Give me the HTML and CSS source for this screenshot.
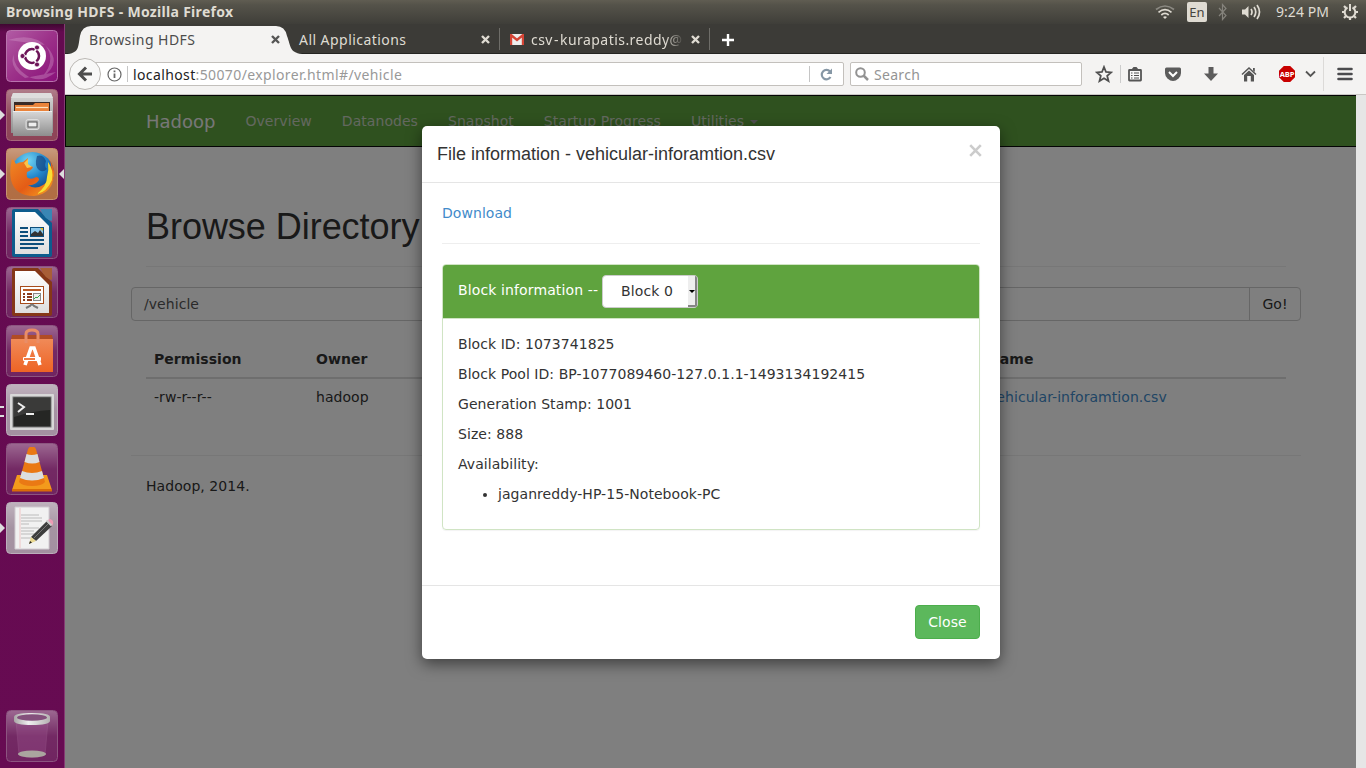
FILE: index.html
```html
<!DOCTYPE html>
<html lang="en">
<head>
<meta charset="utf-8">
<title>Browsing HDFS</title>
<link rel="stylesheet" href="styles.css">
</head>
<body>
<header class="panel">
  <span class="panel-title">Browsing HDFS - Mozilla Firefox</span>
  <div class="indicators">
    <svg width="20" height="16" viewBox="0 0 20 16" fill="none" stroke-width="1.7"><path d="M1 5.5Q10-1.5 19 5.5" stroke="#8b8982"/><path d="M3.5 8.3Q10 3 16.5 8.3M6.3 11Q10 7.7 13.7 11" stroke="#dfdbd2"/><path d="M8 13q2-1.6 4 0l-2 2z" fill="#dfdbd2"/></svg>
    <span class="lang">En</span>
    <svg class="bt" width="10" height="18" viewBox="0 0 10 18" fill="none" stroke="#85837c" stroke-width="1.2"><path d="M1 5l7 7.5-3.5 4V1.5L8 5.5 1 13"/></svg>
    <svg class="vol" width="20" height="18" viewBox="0 0 20 18" fill="none" stroke="#dfdbd2" stroke-width="1.7"><path d="M1 6.5h3L7.5 3v12L4 11.500H1z" fill="#dfdbd2" stroke="none"/><path d="M10 6q2 3 0 6M13 4q3.500 5 0 10M16 2q5 7 0 14"/></svg>
    <span class="clock">9:24 PM</span>
    <svg class="gear" width="18" height="18" viewBox="0 0 18 18" fill="none" stroke="#dfdbd2"><path d="M6.500 4.500a5.300 5.300 0 1 0 5 0" stroke-width="2"/><path d="M9 1v7" stroke-width="2"/><path d="M3 3l2 2M15 3l-2 2M1 9h2.500M17 9h-2.500M3 15l2-2M15 15l-2-2M9 17v-2.500" stroke-width="2.200"/></svg>
  </div>
</header>

<div class="desktop">
<nav class="launcher">
  <svg class="tile" viewBox="0 0 52 52">
    <defs>
      <linearGradient id="dash" x1="0" y1="0" x2="1" y2="1"><stop offset="0" stop-color="#b25ca5"/><stop offset=".5" stop-color="#9c3189"/><stop offset="1" stop-color="#89107a"/></linearGradient>
      <linearGradient id="sheen" x1="0" y1="0" x2="0" y2="1"><stop offset="0" stop-color="#fff" stop-opacity=".36"/><stop offset=".5" stop-color="#fff" stop-opacity=".1"/><stop offset="1" stop-color="#fff" stop-opacity=".08"/></linearGradient>
      <linearGradient id="silver" x1="0" y1="0" x2="0" y2="1"><stop offset="0" stop-color="#d8d8d8"/><stop offset="1" stop-color="#8e8e8e"/></linearGradient>
      <linearGradient id="paper" x1="0" y1="0" x2="0" y2="1"><stop offset="0" stop-color="#fff"/><stop offset="1" stop-color="#dedede"/></linearGradient>
      <linearGradient id="orange" x1="0" y1="0" x2="0" y2="1"><stop offset="0" stop-color="#f08a58"/><stop offset="1" stop-color="#ee6425"/></linearGradient>
      <radialGradient id="globe" cx=".4" cy=".2" r=".8"><stop offset="0" stop-color="#71d4f2"/><stop offset=".5" stop-color="#2387cc"/><stop offset="1" stop-color="#123b7a"/></radialGradient>
      <linearGradient id="fox" x1="0" y1="0" x2="1" y2="1"><stop offset="0" stop-color="#f08a25"/><stop offset=".55" stop-color="#e45c16"/><stop offset="1" stop-color="#f7a523"/></linearGradient>
      <linearGradient id="rim" x1="0" y1="0" x2="1" y2="0"><stop offset="0" stop-color="#a9a6a6"/><stop offset=".4" stop-color="#efefef"/><stop offset="1" stop-color="#b5b2b2"/></linearGradient>
    </defs>
    <rect x=".5" y=".5" width="51" height="51" rx="4" fill="url(#dash)" stroke="#b873ad"/>
    <path d="M2 10Q28 2 42 18T36 47Q51 30 39 15M50 42Q34 55 20 45T8 24Q2 37 19 48" fill="#d7a3cf" opacity=".35"/>
    <circle cx="26" cy="26" r="14" fill="#fff"/><circle cx="26" cy="26" r="7" fill="none" stroke="#6c1458" stroke-width="2.600"/>
    <path d="M26 26L12 26M26 26L33 14M26 26L33 38" stroke="#fff" stroke-width="1.500"/><circle cx="26" cy="26" r="5.200" fill="#fff"/>
    <g fill="#6c1458" stroke="#fff" stroke-width=".8"><circle cx="16.500" cy="26" r="2.500"/><circle cx="31" cy="17.500" r="2.500"/><circle cx="31" cy="34.500" r="2.500"/></g>
  </svg>
  <div class="app run">
    <svg class="tile" viewBox="0 0 52 52"><rect x=".5" y=".5" width="51" height="51" rx="4" fill="#843449" stroke="#a7687a"/><rect x="1" y="1" width="50" height="50" rx="4" fill="url(#sheen)"/><path d="M7 4h38l2 6v34H5V10z" fill="url(#silver)"/><path d="M7 4h38l2 5H5z" fill="#dedede"/><path d="M8 13h36v9H8z" fill="#3a2a26"/><path d="M9 16h18l2-2h14v8H9z" fill="#ea833a"/><path d="M10 18.500h32" stroke="#fde3c0" stroke-width="1.200"/><path d="M7 22h39v25H7z" fill="url(#silver)"/><path d="M7 22.500h39" stroke="#eee"/><rect x="20" y="30.500" width="13" height="10" rx="2" fill="#bbb" stroke="#ddd"/><rect x="22" y="33" width="9" height="5" fill="#eee" stroke="#555"/></svg>
  </div>
  <div class="app run active">
    <svg class="tile" viewBox="0 0 52 52"><rect x=".5" y=".5" width="51" height="51" rx="4" fill="#aa6133" stroke="#c69371"/><rect x="1" y="1" width="50" height="50" rx="4" fill="url(#sheen)"/><circle cx="26.500" cy="25.500" r="21.500" fill="url(#globe)"/><path d="M31 8q6-2 9 5q-2 6 1 8-4 4-8 1-5-4-2-14z" fill="#123f7c" opacity=".65"/><path d="M6 11q3 2 4 5 3-2 7-2l5-4q-1 5 0 7l5 2q-1 3-6 5-1 5 1 6 4 2 8-1 3 0 3 3-4 6-11 5 7 5 15 0 7-4 8-13 1-8-2-13 6 8 5 17-2 18-20 20Q9 48 5 32 3 23 6 11z" fill="url(#fox)"/><path d="M42 14q6 8 4 18-5 12-15 14 10-8 10-17 2-7 1-15z" fill="#f8df35"/><path d="M18 15l4-4v5l4 3-5 1z" fill="#f8c44a"/></svg>
  </div>
  <svg class="tile" viewBox="0 0 52 52"><rect x=".5" y=".5" width="51" height="51" rx="4" fill="#641253" stroke="#8c5580"/><rect x="1" y="1" width="50" height="50" rx="4" fill="url(#sheen)"/><path d="M8 2h24l14 14v32q0 2-2 2H8q-2 0-2-2V4q0-2 2-2z" fill="#0d5c8d"/><path d="M9 5h20l14 14v28H9z" fill="url(#paper)"/><path d="M34 2h12v12q-7-1-12-12z" fill="#3986b4"/><path d="M14 21h8M14 25h8M14 29h8M14 33h24M14 37h24M14 41h18" stroke="#0e4f7b" stroke-width="2"/><rect x="24.500" y="20.500" width="13" height="9" fill="#8cc9ec" stroke="#0e4f7b"/><path d="M25 29v-2l4-3 3 2 2-3 3 4v2z" fill="#333"/><path d="M34 21h3v3z" fill="#e9bd26"/></svg>
  <svg class="tile" viewBox="0 0 52 52"><rect x=".5" y=".5" width="51" height="51" rx="4" fill="#641253" stroke="#8c5580"/><rect x="1" y="1" width="50" height="50" rx="4" fill="url(#sheen)"/><path d="M8 2h24l14 14v32q0 2-2 2H8q-2 0-2-2V4q0-2 2-2z" fill="#853718"/><path d="M9 5h20l14 14v28H9z" fill="url(#paper)"/><path d="M34 2h12v12q-7-1-12-12z" fill="#a85e37"/><rect x="14.500" y="20.500" width="23" height="17" fill="#fff" stroke="#a74c1c"/><path d="M17 24h18" stroke="#b95a25" stroke-width="2"/><path d="M17 28h2M17 31h2M17 34h2M21 28h5M21 31h5M21 34h5" stroke="#8b3b1c" stroke-width="2"/><rect x="27.500" y="27.500" width="7" height="7" fill="#eee" stroke="#888"/><path d="M28 33l2-2 1 1 3-3" fill="none" stroke="#35a84a"/><path d="M20 42l4-2q2-3 4 0l4 2" fill="none" stroke="#777" stroke-width="2"/></svg>
  <svg class="tile" viewBox="0 0 52 52"><rect x=".5" y=".5" width="51" height="51" rx="4" fill="#641253" stroke="#8c5580"/><rect x="1" y="1" width="50" height="50" rx="4" fill="url(#sheen)"/><path d="M6 10h40l1 5H5z" fill="#b14c25"/><path d="M5 14h42v33H5z" fill="url(#orange)"/><path d="M20 18V9q0-4 6-4t6 4v9" fill="none" stroke="#e98d67" stroke-width="3"/><path d="M19 40l6-17h3l6 17" fill="none" stroke="#fff" stroke-width="3.600"/><rect x="17" y="32" width="18" height="4" rx="1" fill="#fff"/><path d="M18 34h11" stroke="#ef6e32" stroke-width="1.800"/></svg>
  <div class="app multi">
    <svg class="tile" viewBox="0 0 52 52"><rect x=".5" y=".5" width="51" height="51" rx="4" fill="#9c8799" stroke="#bcaebb"/><rect x="1" y="1" width="50" height="50" rx="4" fill="url(#sheen)"/><rect x="4" y="10" width="44" height="36" rx="1" fill="#d8d8d8"/><rect x="7" y="13" width="38" height="30" fill="#252624" stroke="#777"/><path d="M8 14h36v12q-18 1-36 7z" fill="#555" opacity=".45"/><path d="M12 19l6 4-6 5M20 30h8" fill="none" stroke="#eee" stroke-width="2"/></svg>
  </div>
  <svg class="tile" viewBox="0 0 52 52"><rect x=".5" y=".5" width="51" height="51" rx="4" fill="#641253" stroke="#8c5580"/><rect x="1" y="1" width="50" height="50" rx="4" fill="url(#sheen)"/><path d="M11 32h30l5 15H6z" fill="#f39a1c"/><path d="M6 46h40v2.500H6z" fill="#d96c08"/><path d="M24 4h4q1.500 0 2.500 4L39 39q-3 4-13 4t-13-4l8.500-31q1-4 2.500-4z" fill="#ea7914"/><path d="M20.500 11q5 2 11 0l2 8q-7 3-15 0zM16 28q10 4 20 0l2 7q-12 5-24 0z" fill="#dcdedf"/></svg>
  <div class="app run">
    <svg class="tile" viewBox="0 0 52 52"><rect x=".5" y=".5" width="51" height="51" rx="4" fill="#9b8798" stroke="#bcaebb"/><rect x="1" y="1" width="50" height="50" rx="4" fill="url(#sheen)"/><path d="M9 5h34v42H9z" fill="#f1f1f1" stroke="#d0cbd0"/><path d="M14 6v40" stroke="#efc5c5"/><path d="M15 13h18M15 16h21M15 19h21M15 22h8M15 26h18M15 29h13M15 32h16M15 36h14" stroke="#bbb"/><path d="M25 35L41 19l5 5-16 15z" fill="#3d3d3d"/><path d="M28 36L43 21" stroke="#777"/><path d="M23 42l2-7 5 4z" fill="#e9d890"/><path d="M42 18l2-1q4 1 3 5l-1 2z" fill="#ed9bb5"/><path d="M40.500 18.500l5 5" stroke="#ccc" stroke-width="2"/><path d="M23 42l1-3 2 1.500z" fill="#222"/></svg>
  </div>
  <svg class="tile trash" viewBox="0 0 52 52"><rect x=".5" y=".5" width="51" height="51" rx="4" fill="#641253" stroke="#8c5580"/><rect x="1" y="1" width="50" height="50" rx="4" fill="url(#sheen)"/><path d="M10 11l3 34q13 5 26 0l3-34z" fill="#a35b96" opacity=".3" stroke="#b982ae" stroke-width=".7"/><ellipse cx="26" cy="44" rx="14" ry="3.500" fill="#aaa59f"/><path d="M8 7q0-4 18-4t18 4v4q-1 4-18 4T8 11z" fill="url(#rim)"/><ellipse cx="26" cy="7.500" rx="15" ry="3.200" fill="#84507c"/></svg>
</nav>

<main class="browser">
  <div class="tabs">
    <svg class="tab-shape" width="240" height="30" viewBox="0 0 240 30"><path d="M0 30C15 30 13 22 15 12Q17 2 26 2H211Q220 2 222 12C226 22 224 30 240 30z" fill="#f4f3f2"/></svg>
    <div class="tab tab-on"><span class="t1">Browsing HDFS</span><svg class="x" width="9" height="9" viewBox="0 0 9 9"><path d="M1 1l7 7M8 1L1 8"/></svg></div>
    <div class="tab tab-two"><span class="t2">All Applications</span><svg class="x" width="9" height="9" viewBox="0 0 9 9"><path d="M1 1l7 7M8 1L1 8"/></svg></div>
    <div class="tab tab-mail"><svg width="14" height="11" viewBox="0 0 14 11"><path d="M0 0h14v11H0z" fill="#eee"/><path d="M1 11V1l6 5 6-5v10" fill="none" stroke="#d54435" stroke-width="2.400"/></svg><span class="t3">csv - kurapatis.reddy@</span><svg class="x" width="9" height="9" viewBox="0 0 9 9"><path d="M1 1l7 7M8 1L1 8"/></svg></div>
    <svg class="plus" width="14" height="14" viewBox="0 0 14 14"><path d="M7 1v12M1 7h12" stroke="#fff" stroke-width="2.400"/></svg>
  </div>
  <div class="toolbar">
    <span class="back"><svg width="16" height="16" viewBox="0 0 16 16" fill="none" stroke="#4d4d4d" stroke-width="3"><path d="M9 1.500L2.500 8 9 14.500M3 8h12"/></svg></span>
    <div class="url">
      <svg width="15" height="15" viewBox="0 0 15 15" fill="none" stroke="#666"><circle cx="7.500" cy="7.500" r="6.500" stroke-width="1.200"/><path d="M7.500 6.500V11M7.500 3.500v1.800" stroke-width="1.800"/></svg>
      <i class="sep"></i><span class="address"><b>localhost</b>:50070/explorer.html#/vehicle</span>
      <i class="sep reload-sep"></i>
      <svg class="reload" width="13" height="13" viewBox="0 0 13 13"><path d="M10 3.500A4.700 4.700 0 1 0 10.500 9" fill="none" stroke="#8697a5" stroke-width="2.200"/><path d="M12 .5V6H6.500z" fill="#8697a5"/></svg>
    </div>
    <div class="search"><svg width="14" height="14" viewBox="0 0 14 14" fill="none" stroke="#929292"><circle cx="5.500" cy="5.500" r="4.300" stroke-width="2"/><path d="M8.500 8.500L13 13" stroke-width="2.500"/></svg><span class="search-text">Search</span></div>
    <div class="tools">
      <svg width="18" height="18" viewBox="0 0 18 18"><path d="M9 2l2 5 5.200.4-4 3.400 1.300 5.200L9 13.200 4.500 16l1.300-5.200-4-3.400L7 7z" fill="none" stroke="#505050" stroke-width="1.800"/></svg>
      <i class="star-sep"></i>
      <svg class="list" width="16" height="16" viewBox="0 0 16 16"><rect x="2" y="4" width="12" height="10.500" rx=".5" fill="#f8f8f8" stroke="#555" stroke-width="1.800"/><path d="M4.500 3.500L6.500 1h3l2 2.500z" fill="#555"/><path d="M4 7h1.500M7 7h5M4 9.500h1.500M7 9.500h5M4 12h1.500M7 12h5" stroke="#505050" stroke-width="1.200"/></svg>
      <svg class="pocket" width="16" height="16" viewBox="0 0 16 16"><path d="M1.500 1.500h13q1.500 0 1.500 1.500v4q0 3-2.500 5.500Q8 17.500 2.500 12.500 0 10 0 7V3q0-1.500 1.500-1.500z" fill="#5c5c5c"/><path d="M4 6l4 4 4-4" fill="none" stroke="#fff" stroke-width="2"/></svg>
      <svg class="down" width="14" height="16" viewBox="0 0 14 16"><path d="M4.500 1h5v6.500H14L7 15 0 7.500h4.500z" fill="#5c5c5c"/></svg>
      <svg class="home" width="16" height="16" viewBox="0 0 16 16"><path d="M1 8.500L8 2l7 6.500" fill="none" stroke="#555" stroke-width="1.500"/><path d="M3 9l5-4.500L13 9v6.500H9.800V10H6.200v5.500H3z" fill="#555"/><path d="M12 2h1.800v4L12 4.500z" fill="#555"/></svg>
      <span class="abp">ABP</span>
      <svg class="chev" width="11" height="8" viewBox="0 0 11 8"><path d="M1 1.500l4.500 4.500L10 1.500" fill="none" stroke="#555" stroke-width="1.800"/></svg>
      <i class="menu-sep"></i>
      <svg class="menu" width="16" height="14" viewBox="0 0 16 14"><path d="M1.500 2h13M1.500 7h13M1.500 12h13" stroke="#4b4b4e" stroke-width="2.600" stroke-linecap="round"/></svg>
    </div>
  </div>

  <div class="viewport">
    <div class="page">
      <div class="navbar"><span class="brand">Hadoop</span><span>Overview</span><span>Datanodes</span><span>Snapshot</span><span>Startup Progress</span><span>Utilities<i class="caret"></i></span></div>
      <div class="container">
        <h1>Browse Directory</h1>
        <div class="path"><span class="path-input">/vehicle</span><span class="go">Go!</span></div>
        <table>
          <thead><tr><th class="perm">Permission</th><th class="owner">Owner</th><th>Name</th></tr></thead>
          <tbody><tr><td>-rw-r--r--</td><td>hadoop</td><td class="link">vehicular-inforamtion.csv</td></tr></tbody>
        </table>
        <footer>Hadoop, 2014.</footer>
      </div>
      <div class="backdrop">
        <section class="modal">
          <div class="modal-head"><h4>File information - vehicular-inforamtion.csv</h4><svg width="13" height="13" viewBox="0 0 13 13"><path d="M1.200 1.200l10.600 10.600M11.800 1.200L1.200 11.800" stroke="#ccc" stroke-width="2.600"/></svg></div>
          <div class="modal-body">
            <div class="download">Download</div>
            <div class="block">
              <div class="block-head"><span>Block information --</span><span class="select"><span class="option">Block 0</span><i class="drop"></i></span></div>
              <div class="block-body">
                <p>Block ID: 1073741825</p>
                <p>Block Pool ID: BP-1077089460-127.0.1.1-1493134192415</p>
                <p>Generation Stamp: 1001</p>
                <p>Size: 888</p>
                <p>Availability:</p>
                <ul><li>jaganreddy-HP-15-Notebook-PC</li></ul>
              </div>
            </div>
          </div>
          <div class="modal-foot"><span class="close">Close</span></div>
        </section>
      </div>
    </div>
    <div class="scrollbar"></div>
  </div>
</main>
</div>
</body>
</html>
```

FILE: styles.css
```css
* { box-sizing: border-box; }
body { margin: 0; width: 1366px; height: 768px; overflow: hidden; font: 14px/20px "DejaVu Sans", sans-serif; color: #333; }
svg { display: block; flex: none; }
i { flex: none; }

.panel { height: 24px; display: flex; justify-content: space-between; align-items: center; padding: 0 7px 0 6px; background: linear-gradient(#605d52, #55534a 20%, #3f3e39); color: #dfdbd2; font-family: "Noto Sans", sans-serif; }
.panel-title { font-weight: 700; font-size: 14px; letter-spacing: .3px; white-space: nowrap; }
.indicators { display: flex; align-items: center; }
.lang { width: 20px; height: 20px; margin-left: 12px; border-radius: 2px; background: #dfdbd2; color: #45443e; font-size: 13px; line-height: 21px; text-align: center; }
.bt { margin-left: 11px; }
.vol { margin-left: 13px; }
.clock { margin-left: 15px; width: 53px; font-size: 14px; letter-spacing: .05px; white-space: nowrap; }
.gear { margin-left: 12px; }

.desktop { display: flex; height: 744px; }
.launcher { width: 65px; flex: none; display: flex; flex-direction: column; gap: 7px; padding: 6px 0 6px 6px; background: linear-gradient(#3f0731, #640a50 8px, #670b52); border-right: 1px solid #853a73; }
.tile { width: 52px; height: 52px; }
.trash { margin-top: auto; }
.app { position: relative; height: 52px; }
.run::before { content: ""; position: absolute; left: -6px; top: 21px; border: 5px solid transparent; border-left-color: #ddd; border-right: 0; }
.active::after { content: ""; position: absolute; right: 0; top: 21px; border: 5px solid transparent; border-right-color: #ddd; border-left: 0; }
.multi::before { content: ""; position: absolute; left: -6px; top: 22px; width: 4px; height: 7px; border: solid #ddd; border-width: 2px 0; }

.browser { width: 1301px; display: flex; flex-direction: column; }
.tabs { position: relative; height: 30px; display: flex; align-items: center; padding-left: 24px; background: #3c3b37; border-bottom: 1px solid #252522; font-family: "Noto Sans", sans-serif; color: #dfdbd2; }
.tab-shape { position: absolute; left: 0; top: 0; }
.tab { position: relative; height: 22px; display: flex; align-items: center; justify-content: space-between; white-space: nowrap; padding-top: 2px; letter-spacing: .45px; }
.x { fill: none; stroke: #dfdbd2; stroke-width: 2.400; }
.tab-on { width: 191px; color: #4c4c4c; }
.tab-on .x { stroke: #555; }
.tab-two { width: 191px; margin-left: 19px; }
.tab-mail { width: 211px; margin-left: 9px; border: solid #6e6d68; border-width: 0 1px; padding: 2px 9px 0 10px; }
.t3 { width: 153px; margin-left: 7px; margin-right: auto; overflow: hidden; word-spacing: -3px; -webkit-mask-image: linear-gradient(90deg, #000 88%, transparent); mask-image: linear-gradient(90deg, #000 88%, transparent); }
.plus { margin: 2px 0 0 11px; }

.toolbar { height: 41px; flex: none; display: flex; align-items: center; background: #f4f3f2; border-bottom: 1px solid #c9c7c4; font-family: "Noto Sans", sans-serif; }
.back { width: 32px; height: 32px; flex: none; margin-left: 4px; display: grid; place-items: center; border: 1px solid #bbb8b4; border-radius: 50%; background: #f8f8f7; z-index: 1; }
.url { width: 749px; height: 24px; margin-left: -6px; display: flex; align-items: center; padding-left: 11px; background: #fff; border: 1px solid #c3c0bc; border-radius: 0 2px 2px 0; color: #999; }
.sep { width: 1px; height: 16px; margin-left: 5px; background: #c5c5c5; }
.address { margin-left: 5px; padding-top: 1px; letter-spacing: .38px; white-space: nowrap; }
.address b { color: #222; font-weight: 400; }
.reload-sep { margin-left: auto; }
.reload { margin: 0 10px; }
.search { width: 232px; height: 24px; margin-left: 6px; padding-left: 4px; display: flex; align-items: center; gap: 5px; background: #fff; border: 1px solid #c3c0bc; border-radius: 2px; color: #949494; }
.search-text { padding-top: 1px; letter-spacing: .3px; }
.tools { display: flex; align-items: center; padding-left: 13px; }
.star-sep { width: 1px; height: 18px; margin-left: 7px; background: #ccc; }
.list { margin-left: 6px; }
.pocket { margin-left: 22px; }
.down { margin-left: 23px; }
.home { margin-left: 23px; }
.abp { width: 16px; height: 16px; margin-left: 22px; background: #c80000; color: #fff; clip-path: polygon(30% 0, 70% 0, 100% 30%, 100% 70%, 70% 100%, 30% 100%, 0 70%, 0 30%); font: 700 7.5px/16px "Open Sans", sans-serif; letter-spacing: -.2px; text-align: center; }
.chev { margin-left: 10px; }
.menu-sep { width: 1px; height: 34px; margin-left: 7px; background: #dcdad8; }
.menu { margin-left: 13px; }

.viewport { flex: 1; display: flex; min-height: 0; }
.scrollbar { width: 10px; background: #e6e6e6; }
.page { position: relative; width: 1291px; background: #fff; letter-spacing: .055px; }
.navbar { height: 52px; display: flex; align-items: center; gap: 30px; padding-left: 80px; background: #5fa33e; border: 1px solid #080808; border-right: 0; color: #c6d0c0; white-space: nowrap; }
.brand { padding-top: 2px; font-size: 18px; letter-spacing: 0; color: #eee; }
.caret { display: inline-block; margin-left: 6px; vertical-align: middle; border: 4px solid transparent; border-top-color: #a0a0a0; border-bottom: 0; }
.container { width: 1170px; margin-left: 66px; }
h1 { margin: 0 15px 20px; height: 120px; padding-top: 60px; border-bottom: 1px solid #eee; font: 500 36px/40px "Liberation Sans", sans-serif; letter-spacing: -.04px; }
.path { height: 34px; display: flex; border: 1px solid #ccc; border-radius: 4px; line-height: 32px; }
.path-input { flex: 1; padding-left: 12px; color: #555; }
.go { width: 51px; border-left: 1px solid #ccc; text-align: center; }
table { width: 1140px; margin: 20px 15px 0; border-collapse: separate; border-spacing: 0; table-layout: fixed; }
th { padding: 8px; text-align: left; border-bottom: 2px solid #ddd; }
td { padding: 8px; }
.perm { width: 162px; }
.owner { width: 672px; }
.link { color: #428bca; }
footer { margin-top: 40px; padding: 20px 15px; border-top: 1px solid #eee; }

.backdrop { position: absolute; inset: 0; background: rgba(0, 0, 0, .5); }
.modal { width: 578px; height: 533px; margin: 31px 0 0 357px; display: flex; flex-direction: column; background: #fff; border-radius: 5px; box-shadow: 0 5px 15px rgba(0, 0, 0, .5); }
.modal-head { height: 57px; display: flex; justify-content: space-between; padding: 18px 18px 0 15px; border-bottom: 1px solid #e5e5e5; }
h4 { margin: 0; font: 500 18px/20px "Liberation Sans", sans-serif; letter-spacing: 0; white-space: nowrap; }
.modal-body { flex: 1; padding: 20px; }
.download { height: 41px; color: #428bca; border-bottom: 1px solid #eee; }
.block { height: 266px; margin-top: 20px; border: 1px solid #d0e4c4; border-radius: 4px; box-shadow: 0 1px 1px rgba(0, 0, 0, .05); }
.block-head { height: 54px; display: flex; align-items: center; gap: 4px; padding: 0 15px 3px; border-bottom: 1px solid #d0e4c4; border-radius: 3px 3px 0 0; background: #5fa33e; color: #fff; letter-spacing: .12px; white-space: nowrap; }
.select { width: 96px; height: 33px; margin-top: 3px; display: flex; align-items: center; justify-content: space-between; padding-left: 18px; color: #333; background: #fff; border: 1px solid #ccc; border-radius: 4px; }
.option { padding-bottom: 2px; }
.drop { position: relative; width: 9px; height: 31px; background: #eee; border: solid #858585; border-width: 0 2px 2px 0; border-radius: 0 2px 2px 0; }
.drop::after { content: ""; position: absolute; left: 1px; top: 14px; border: 3px solid transparent; border-top-color: #000; border-bottom: 0; }
.block-body { padding: 15px; }
p { margin: 0 0 10px; }
ul { margin: 0; padding-left: 40px; }
.modal-foot { height: 74px; padding: 19px 20px; display: flex; justify-content: flex-end; border-top: 1px solid #e5e5e5; }
.close { width: 65px; height: 34px; background: #5cb85c; border: 1px solid #4cae4c; border-radius: 4px; color: #fff; line-height: 32px; text-align: center; }
```
